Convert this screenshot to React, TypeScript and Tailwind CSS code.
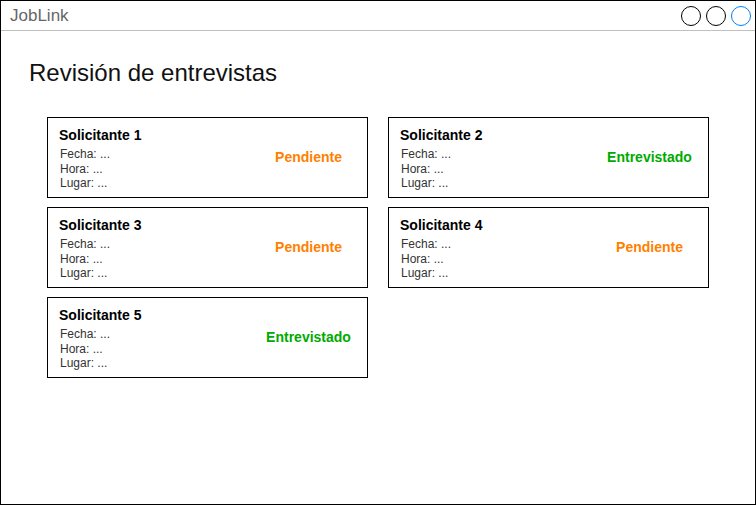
import React from "react";

interface Entrevista {
  nombre: string;
  estado: "Pendiente" | "Entrevistado";
}

const ENTREVISTAS: Entrevista[] = [
  { nombre: "Solicitante 1", estado: "Pendiente" },
  { nombre: "Solicitante 2", estado: "Entrevistado" },
  { nombre: "Solicitante 3", estado: "Pendiente" },
  { nombre: "Solicitante 4", estado: "Pendiente" },
  { nombre: "Solicitante 5", estado: "Entrevistado" },
];

function Tarjeta({ item }: { item: Entrevista }) {
  const pendiente = item.estado === "Pendiente";
  return (
    <div className="flex h-[81px] border border-black bg-white">
      <div className="flex-1 pl-[11px] pt-[9px]">
        <div className="text-[14px] font-bold leading-[17px] text-black">{item.nombre}</div>
        <div className="mt-[3px] pl-[1px] text-[12px] leading-[14.5px] text-[#333]">
          <div>Fecha: ...</div>
          <div>Hora: ...</div>
          <div>Lugar: ...</div>
        </div>
      </div>
      <div
        className={
          "w-[117px] pt-[31px] text-center text-[14px] font-bold leading-[17px] " +
          (pendiente ? "text-[#ff8000]" : "text-[#00aa00]")
        }
      >
        {item.estado}
      </div>
    </div>
  );
}

export default function App() {
  return (
    <div
      className="flex h-[505px] w-[756px] flex-col border border-black bg-white"
      style={{ fontFamily: '"Liberation Sans", Arial, sans-serif' }}
    >
      {/* Barra superior */}
      <div className="flex h-[30px] items-center justify-between border-b border-[#c0c0c0] pl-[9px] pr-[4px]">
        <span className="text-[17px] text-[#666]">JobLink</span>
        <div className="flex gap-[5px] pt-[1px]">
          <div className="h-[20px] w-[20px] rounded-full border border-black" />
          <div className="h-[20px] w-[20px] rounded-full border border-black" />
          <div className="h-[20px] w-[20px] rounded-full border border-[#0080f0]" />
        </div>
      </div>

      <div className="px-[28px] pt-[27px]">
        <h1 className="text-[24px] leading-[30px] text-[#111]">Revisión de entrevistas</h1>
        <div className="mt-[29px] grid grid-cols-[321px_321px] gap-x-[20px] gap-y-[9px] pl-[18px]">
          {ENTREVISTAS.map((e) => (
            <Tarjeta key={e.nombre} item={e} />
          ))}
        </div>
      </div>
    </div>
  );
}
